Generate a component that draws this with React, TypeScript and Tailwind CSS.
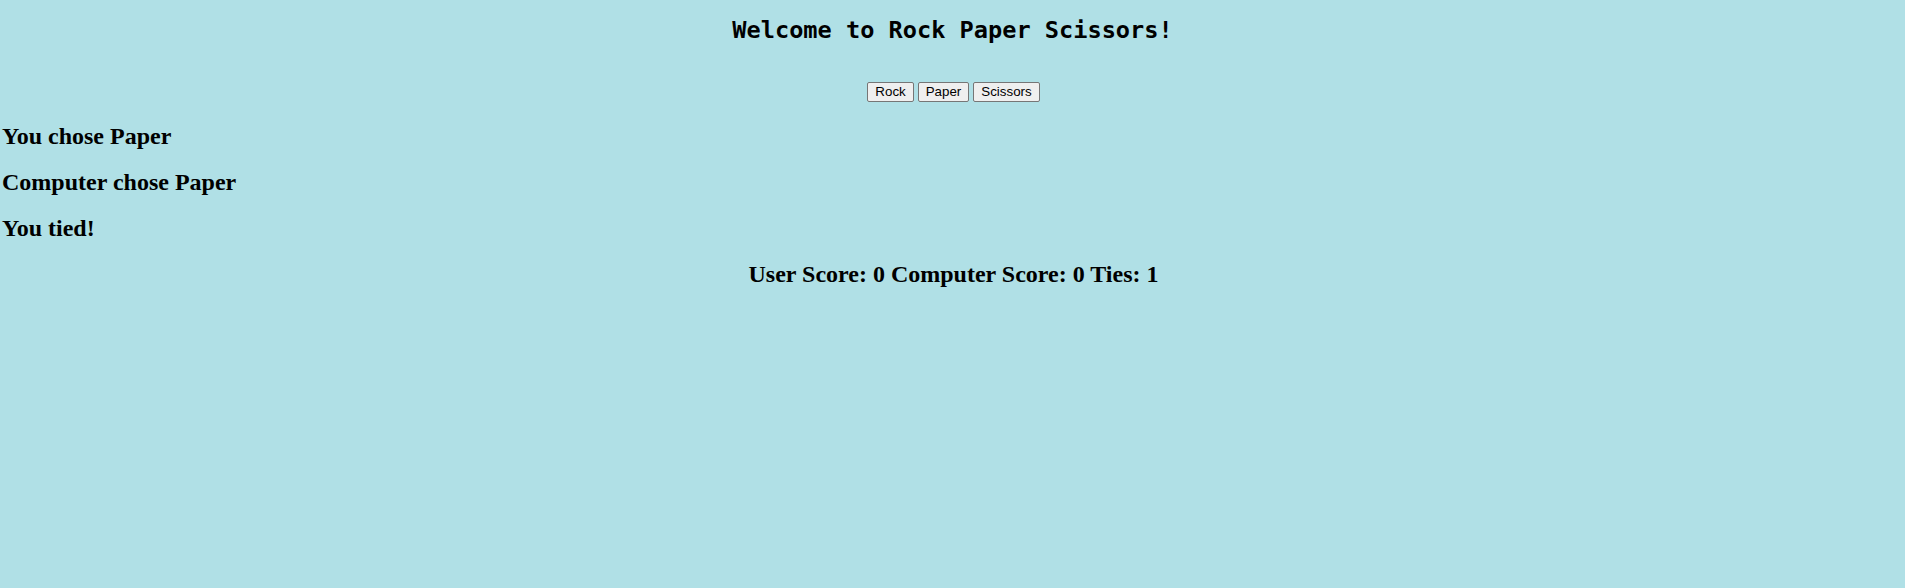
import React from "react";

export default function App() {
  const choices = ["Rock", "Paper", "Scissors"];
  return (
    <div className="min-h-[588px] w-full bg-[#b0e0e6] pt-[16px] text-black">
      <h1 className="m-0 text-center font-['DejaVu_Sans_Mono',monospace] text-[23.6px] font-bold leading-[28px]">
        Welcome to Rock Paper Scissors!
      </h1>
      <div className="mt-[38px] flex justify-center gap-[4px] pl-[2px]">
        {choices.map((c) => (
          <button
            key={c}
            className="h-[20px] rounded-[2px] border border-[#767676] bg-[#efefef] px-[7px] font-['Liberation_Sans',Arial,sans-serif] text-[13.33px] leading-[16px] text-black"
          >
            {c}
          </button>
        ))}
      </div>
      <div className="mt-[20.5px] flex flex-col gap-[19.93px] pl-[2px] font-['Liberation_Serif','Times_New_Roman',serif] text-[24px] font-bold leading-[26.4px]">
        <h2 className="m-0">You chose Paper</h2>
        <h2 className="m-0">Computer chose Paper</h2>
        <h2 className="m-0">You tied!</h2>
        <h2 className="m-0 text-center">User Score: 0 Computer Score: 0 Ties: 1</h2>
      </div>
    </div>
  );
}
